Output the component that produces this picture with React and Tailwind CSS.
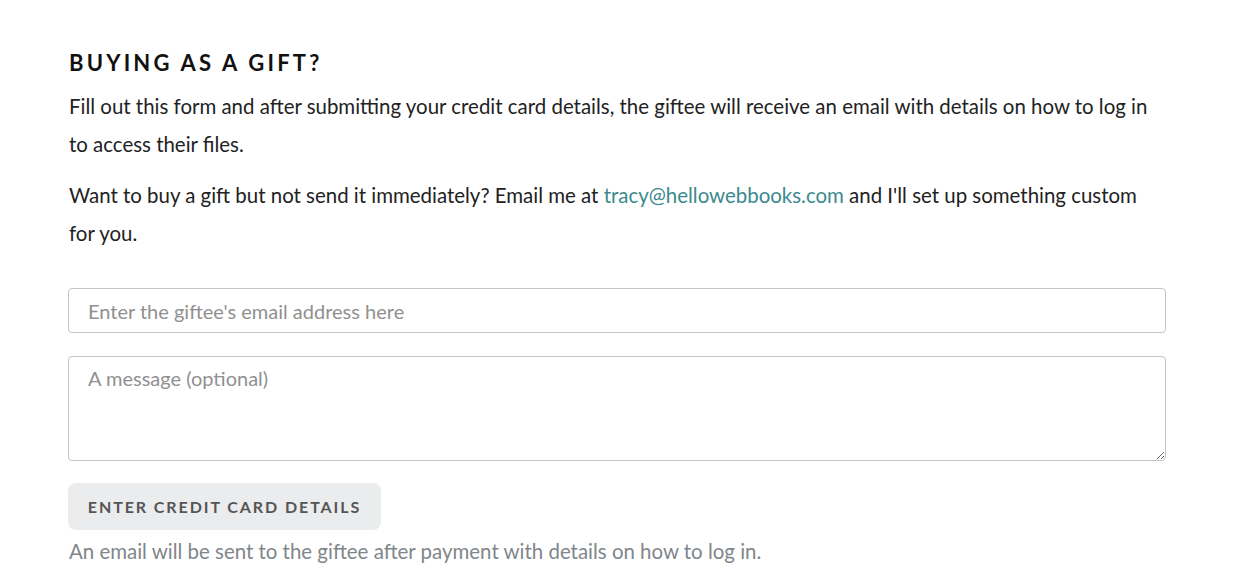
import React from "react";

const App = () => {
  return (
    <div className="min-h-screen bg-white font-['Lato','Liberation_Sans',sans-serif] text-[#222]">
      <div className="w-[1098px] ml-[68px] pt-[48px]">
        <h2 className="text-[22px] font-bold tracking-[0.145em] leading-[30px] text-[#111] ml-px">
          BUYING AS A GIFT?
        </h2>
        <p className="mt-[9px] text-[20.45px] leading-[38px] ml-px">
          Fill out this form and after submitting your credit card details, the giftee will receive an email with details on how to log in to access their files.
        </p>
        <p className="mt-[13px] text-[20.45px] leading-[38px] ml-px">
          Want to buy a gift but not send it immediately? Email me at{" "}
          <a href="#" className="text-[#3b8a8e]">tracy@hellowebbooks.com</a> and I'll set up something custom for you.
        </p>
        <form className="mt-[36px] flex flex-col" onSubmit={(e) => e.preventDefault()}>
          <input
            type="email"
            placeholder="Enter the giftee's email address here"
            className="h-[45px] w-full rounded-[4px] border border-[#c4c4c4] px-[19px] text-[20px] placeholder:text-[#909090] outline-none"
          />
          <textarea
            placeholder="A message (optional)"
            className="mt-[23px] h-[105px] w-full rounded-[4px] border border-[#c4c4c4] px-[19px] py-[7px] text-[20px] leading-[28px] placeholder:text-[#909090] outline-none"
          />
          <div>
            <button
              type="submit"
              className="mt-[22px] h-[47px] w-[313px] rounded-[8px] bg-[#ebecee] text-[16px] font-bold tracking-[0.12em] text-[#555]"
            >
              ENTER CREDIT CARD DETAILS
            </button>
          </div>
          <p className="mt-[6px] text-[20.45px] leading-[30px] text-[#80868b] ml-px">
            An email will be sent to the giftee after payment with details on how to log in.
          </p>
        </form>
      </div>
    </div>
  );
};

export default App;
